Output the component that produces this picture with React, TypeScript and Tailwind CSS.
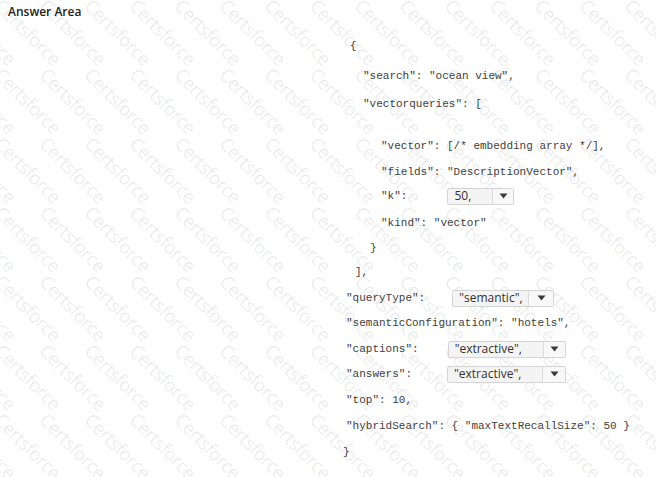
import React from "react";

const mono = "font-['Liberation_Mono','DejaVu_Sans_Mono',monospace]";

function Watermark() {
  const items: { x: number; y: number }[] = [];
  for (let j = -2; j < 9; j++) {
    for (let i = -3; i < 16; i++) {
      items.push({ x: 5 + 45 * i, y: -4 + 69 * j });
    }
  }
  return (
    <div className="pointer-events-none absolute inset-0 overflow-hidden">
      {items.map((p, k) => (
        <span
          key={k}
          className="absolute origin-top-left rotate-45 whitespace-nowrap font-['Open_Sans','Liberation_Sans',sans-serif] text-[18px] font-light leading-none text-[#e6e6e6]"
          style={{ left: p.x, top: p.y }}
        >
          Certsforce
        </span>
      ))}
    </div>
  );
}

function Drop({ value, textW, arrowW }: { value: string; textW: string; arrowW: string }) {
  return (
    <div className="flex h-[17px] items-stretch rounded-[2px] border border-[#d5d5d5] bg-[#f4f4f4]">
      <div className={`${textW} flex items-center pl-[6px] font-['Open_Sans','Noto_Sans',sans-serif] text-[12px] text-[#333] leading-none`}>
        {value}
      </div>
      <div className={`${arrowW} flex items-center justify-center border-l border-[#dcdcdc] bg-[#f8f8f8]`}>
        <svg width="9" height="6" viewBox="0 0 9 6">
          <path d="M0.5 0.5 L8.5 0.5 L4.5 5.5 Z" fill="#3a3a3a" />
        </svg>
      </div>
    </div>
  );
}

export default function App() {
  return (
    <div className="relative h-[477px] w-[656px] overflow-hidden bg-white">
      <Watermark />
      <div className="relative">
        <div className="pl-[8px] pt-[4px] font-['Open_Sans','Noto_Sans',sans-serif] text-[12px] font-semibold leading-[16px] text-[#222]">
          Answer Area
        </div>
        <div className={`${mono} text-[11px] text-[#404040] whitespace-pre`}>
          <div className="mt-[13px] flex h-[26px] items-center pl-[350px]">{"{"}</div>
          <div className="mt-[4px] flex h-[26px] items-center pl-[363px]">{'"search": "ocean view",'}</div>
          <div className="mt-[2px] flex h-[26px] items-center pl-[363px]">{'"vectorqueries": ['}</div>
          <div className="mt-[16px] flex h-[26px] items-center pl-[381px]">{'"vector": [/* embedding array */],'}</div>
          <div className="flex h-[26px] items-center pl-[381px]">{'"fields": "DescriptionVector",'}</div>
          <div className="-mt-[2px] flex h-[26px] items-center pl-[381px]">
            <span>{'"k":'}</span>
            <div className="ml-[40px]">
              <Drop value="50," textW="w-[44px]" arrowW="w-[21px]" />
            </div>
          </div>
          <div className="mt-[1px] flex h-[26px] items-center pl-[381px]">{'"kind": "vector"'}</div>
          <div className="-mt-[1px] flex h-[26px] items-center pl-[370px]">{"}"}</div>
          <div className="-mt-[2px] flex h-[26px] items-center pl-[355px]">{"],"}</div>
          <div className="flex h-[26px] items-center pl-[346px]">
            <span>{'"queryType":'}</span>
            <div className="ml-[27px]">
              <Drop value={'"semantic",'} textW="w-[75px]" arrowW="w-[25px]" />
            </div>
          </div>
          <div className="-mt-[1px] flex h-[26px] items-center pl-[346px]">{'"semanticConfiguration": "hotels",'}</div>
          <div className="flex h-[26px] items-center pl-[346px]">
            <span>{'"captions":'}</span>
            <div className="ml-[29px]">
              <Drop value={'"extractive",'} textW="w-[94px]" arrowW="w-[22px]" />
            </div>
          </div>
          <div className="-mt-[1px] flex h-[26px] items-center pl-[346px]">
            <span>{'"answers":'}</span>
            <div className="ml-[35px]">
              <Drop value={'"extractive",'} textW="w-[94px]" arrowW="w-[23px]" />
            </div>
          </div>
          <div className="flex h-[26px] items-center pl-[346px]">{'"top": 10,'}</div>
          <div className="flex h-[26px] items-center pl-[346px]">{'"hybridSearch": { "maxTextRecallSize": 50 }'}</div>
          <div className="flex h-[26px] items-center pl-[343px]">{"}"}</div>
        </div>
      </div>
    </div>
  );
}
